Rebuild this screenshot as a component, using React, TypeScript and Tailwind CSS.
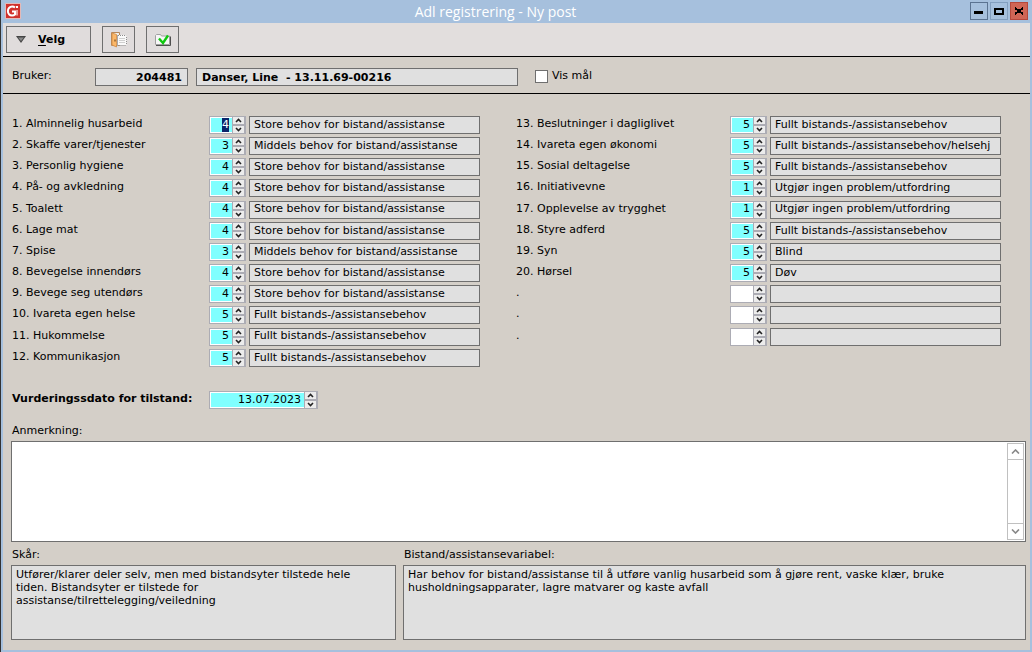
import { useEffect, useRef } from "react";
import type { ReactNode, Ref } from "react";
import clsx from "clsx";

type Row = { label: string; value: string; text: string };

const STORE = "Store behov for bistand/assistanse";
const MIDDELS = "Middels behov for bistand/assistanse";
const FULLT = "Fullt bistands-/assistansebehov";
const INGEN = "Utgjør ingen problem/utfordring";

const leftRows: Row[] = [
  { label: "1. Alminnelig husarbeid", value: "4", text: STORE },
  { label: "2. Skaffe varer/tjenester", value: "3", text: MIDDELS },
  { label: "3. Personlig hygiene", value: "4", text: STORE },
  { label: "4. På- og avkledning", value: "4", text: STORE },
  { label: "5. Toalett", value: "4", text: STORE },
  { label: "6. Lage mat", value: "4", text: STORE },
  { label: "7. Spise", value: "3", text: MIDDELS },
  { label: "8. Bevegelse innendørs", value: "4", text: STORE },
  { label: "9. Bevege seg utendørs", value: "4", text: STORE },
  { label: "10. Ivareta egen helse", value: "5", text: FULLT },
  { label: "11. Hukommelse", value: "5", text: FULLT },
  { label: "12. Kommunikasjon", value: "5", text: FULLT },
];

const rightRows: Row[] = [
  { label: "13. Beslutninger i dagliglivet", value: "5", text: FULLT },
  { label: "14. Ivareta egen økonomi", value: "5", text: "Fullt bistands-/assistansebehov/helsehj" },
  { label: "15. Sosial deltagelse", value: "5", text: FULLT },
  { label: "16. Initiativevne", value: "1", text: INGEN },
  { label: "17. Opplevelse av trygghet", value: "1", text: INGEN },
  { label: "18. Styre adferd", value: "5", text: FULLT },
  { label: "19. Syn", value: "5", text: "Blind" },
  { label: "20. Hørsel", value: "5", text: "Døv" },
  { label: ".", value: "", text: "" },
  { label: ".", value: "", text: "" },
  { label: ".", value: "", text: "" },
];

function Chevron({ down }: { down?: boolean }) {
  return (
    <svg viewBox="0 0 11 7" className={clsx("h-[7px] w-[11px]", down && "rotate-180")} fill="none">
      <path d="M3 5 5.5 2.5 8 5" stroke="#222" strokeWidth="1.6" />
    </svg>
  );
}

function Spinner({
  id,
  value,
  className,
  inputRef,
}: {
  id: string;
  value: string;
  className: string;
  inputRef?: Ref<HTMLInputElement>;
}) {
  return (
    <div className={clsx("flex h-[18px] shrink-0 gap-px bg-[#acacb4] p-px pr-[2px]", className)}>
      <input
        id={id}
        ref={inputRef}
        defaultValue={value}
        className={clsx(
          "min-w-0 flex-1 border border-r-0 border-white pr-[3px] text-right outline-none selection:bg-[#0a246a] selection:text-white",
          value ? "bg-[#80ffff]" : "bg-white",
        )}
      />
      <div className="flex w-[11px] shrink-0 flex-col justify-between">
        <button type="button" aria-label="Opp" className="h-[7px] bg-[#ececec]">
          <Chevron />
        </button>
        <button type="button" aria-label="Ned" className="h-[7px] bg-[#ececec]">
          <Chevron down />
        </button>
      </div>
    </div>
  );
}

function Column({
  rows,
  start,
  className,
  labelClassName,
  firstRef,
}: {
  rows: Row[];
  start: number;
  className: string;
  labelClassName: string;
  firstRef?: Ref<HTMLInputElement>;
}) {
  return (
    <div className={clsx("grid h-[254px] grow grid-rows-12", className)}>
      {rows.map((row, i) => {
        const id = `adl-${start + i}`;

        return (
          <div key={id} className="flex h-[18px] min-w-0">
            <label htmlFor={id} className={clsx("shrink-0 leading-4", labelClassName)}>
              {row.label}
            </label>
            <Spinner id={id} value={row.value} className="w-[37px]" inputRef={i === 0 ? firstRef : undefined} />
            <input
              readOnly
              aria-label={`${row.label} beskrivelse`}
              value={row.text}
              className="ml-[3px] min-w-0 flex-1 border border-[#6f6f6f] bg-[#e0e0e0] px-1 outline-none"
            />
          </div>
        );
      })}
    </div>
  );
}

function WindowButton({ label, className, children }: { label: string; className: string; children: ReactNode }) {
  return (
    <button type="button" aria-label={label} className={clsx("size-[18px] border", className)}>
      <svg viewBox="0 0 16 16" className="size-4" fill="none" stroke="#000" shapeRendering="crispEdges">
        {children}
      </svg>
    </button>
  );
}

function Logo() {
  return (
    <svg viewBox="0 0 16 16" className="mt-px size-4 shrink-0">
      <rect width="16" height="16" fill="#e3b9b8" />
      <rect x="1" y="1" width="14" height="14" fill="#d0312d" />
      <path
        d="M10 4.500C8.500 3.300 5.800 3.200 4.200 4.800 2.500 6.500 2.500 9.500 4 11.200c1.600 1.700 4.500 1.600 6 .3V8.500H7"
        fill="none"
        stroke="#fff"
        strokeWidth="2"
      />
      <path d="M12 7v5.500" stroke="#f3c4c2" strokeWidth="1.500" />
      <rect x="11" y="3" width="2" height="2" fill="#fff" />
    </svg>
  );
}

function DoorIcon() {
  return (
    <svg viewBox="0 0 18 18" className="size-[18px]">
      <path d="M1.500 1.500h8v13h-8z" fill="#f1eee9" stroke="#b5875a" />
      <path d="M2 2l4.500 1.500V16L2 14z" fill="#fbb768" stroke="#d08a45" strokeWidth=".8" />
      <path d="M5 8.500v2" stroke="#5b3a17" />
      <path d="M8 4h7l1.500 1.500V14H8z" fill="#fafafa" />
      <path d="M8 4.500h7.500M8.500 14.500h8M16.500 6v8" fill="none" stroke="#8d8d8d" strokeDasharray="1 1" />
      <path d="M9 7.500h6M9 9.500h6M9 11.500h6" stroke="#d0d0d0" />
      <path d="M7.500 4v11" stroke="#a9a9a9" />
    </svg>
  );
}

function CheckFolderIcon() {
  return (
    <svg viewBox="0 0 18 18" className="size-[18px]">
      <path d="M1.500 13.500v-9l1-1h4l1 1.500h8v8.500z" fill="#f7f7f7" stroke="#a0a0a0" />
      <path d="M2 14.500h14.500V5.500" fill="none" stroke="#4f4f4f" />
      <path d="m5 7.500 4 4.500 5-7.500" fill="none" stroke="#10c810" strokeWidth="2.400" />
    </svg>
  );
}

function ScrollArrow({ label, down }: { label: string; down?: boolean }) {
  return (
    <button
      type="button"
      aria-label={label}
      className={clsx("flex h-4 items-center justify-center border-[#c0c0c0]", down ? "border-t" : "border-b")}
    >
      <svg viewBox="0 0 9 5" className={clsx("h-[5px] w-[9px]", down && "rotate-180")} fill="none">
        <path d="M1 4.500 4.500 1 8 4.500" stroke="#888" strokeWidth="1.600" />
      </svg>
    </button>
  );
}

const fieldBox = "h-[18px] border border-[#6f6f6f] bg-[#e0e0e0] pt-px font-bold outline-none";
const toolButton = "flex h-[27px] items-center border border-[#6f6f6f] bg-[#e0dcdc]";
const infoBox =
  "block h-[75px] w-full resize-none border border-[#6f6f6f] bg-[#e0e0e0] py-[2px] pr-4 pl-1 leading-[13px] outline-none";

export default function App() {
  const firstField = useRef<HTMLInputElement>(null);

  useEffect(() => {
    firstField.current?.focus();
    firstField.current?.select();
  }, []);

  return (
    <div className="flex min-h-screen border-l border-[#333] bg-[#a6c0dd] font-['DejaVu_Sans',Verdana,sans-serif] text-[11px] text-black">
      <div className="flex min-w-0 flex-1 flex-col px-[2px] pb-[2px]">
        <header className="flex h-[23px] items-start gap-[2px] px-[2px] pt-[2px]">
          <Logo />
          <h1 className="flex-1 text-center font-['Open_Sans',sans-serif] text-[14px] leading-5 text-white">
            Adl registrering - Ny post
          </h1>
          <WindowButton label="Minimer" className="border-[#5b7391]">
            <path d="M3 9.500h9" strokeWidth="3" />
          </WindowButton>
          <WindowButton label="Maksimer" className="border-[#839fbf]">
            <path d="M4 5.500h8v5H4z" strokeWidth="2" />
          </WindowButton>
          <WindowButton label="Lukk" className="border-[#b5483c] bg-[#cf6555]">
            <path d="m4 5 8 6M12 5l-8 6" strokeWidth="2" />
          </WindowButton>
        </header>

        <div className="flex h-[34px] items-start gap-[11px] border-b border-black bg-[#e2dedd] pt-[3px] pl-[3px]">
          <button type="button" className={clsx(toolButton, "w-[85px] gap-3 pl-[9px] font-bold")}>
            <svg viewBox="0 0 10 7" className="h-[7px] w-[10px]">
              <path d="M0 0h10L5 7z" fill="#444" />
              <path d="M2 1.500h6L5 5z" fill="#888" />
            </svg>
            <span className="pt-[2px]">
              <span className="underline underline-offset-2">V</span>elg
            </span>
          </button>
          <button type="button" aria-label="Avslutt" className={clsx(toolButton, "w-[33px] justify-center")}>
            <DoorIcon />
          </button>
          <button type="button" aria-label="Lagre" className={clsx(toolButton, "w-[33px] justify-center")}>
            <CheckFolderIcon />
          </button>
        </div>

        <div className="flex h-[37px] items-center border-b border-black bg-[#d4cfc8] pt-[3px] pl-[9px]">
          <label htmlFor="bruker" className="w-[83px]">
            Bruker:
          </label>
          <input id="bruker" readOnly value="204481" className={clsx(fieldBox, "w-[93px] px-[5px] text-right")} />
          <input
            readOnly
            aria-label="Navn"
            value="Danser, Line  - 13.11.69-00216"
            className={clsx(fieldBox, "ml-2 w-[322px] px-[5px] whitespace-pre")}
          />
          <label className="ml-[17px] flex items-center gap-1">
            <input type="checkbox" className="size-[13px] appearance-none border border-[#6f6f6f] bg-white" />
            Vis mål
          </label>
        </div>

        <main className="flex-1 bg-[#d4cfc8] pt-[22px]">
          <div className="flex gap-9 pr-[29px] pl-[9px]">
            <Column
              rows={leftRows}
              start={1}
              className="basis-[468px]"
              labelClassName="w-[197px]"
              firstRef={firstField}
            />
            <Column rows={rightRows} start={13} className="basis-[485px]" labelClassName="w-[214px]" />
          </div>

          <div className="mt-[21px] flex pl-[9px]">
            <label htmlFor="dato" className="w-[197px] leading-4 font-bold">
              Vurderingssdato for tilstand:
            </label>
            <Spinner id="dato" value="13.07.2023" className="w-[109px]" />
          </div>

          <div className="mt-3 pr-1 pl-2">
            <label htmlFor="anmerkning" className="block h-5 pl-px leading-5">
              Anmerkning:
            </label>
            <div className="flex h-[101px] border border-[#6f6f6f] bg-white p-px">
              <textarea id="anmerkning" className="min-w-0 flex-1 resize-none outline-none" />
              <div className="flex w-[17px] flex-col justify-between border border-[#c0c0c0]">
                <ScrollArrow label="Rull opp" />
                <ScrollArrow label="Rull ned" down />
              </div>
            </div>
          </div>

          <div className="flex gap-[7px] pt-[3px] pr-1 pb-[10px] pl-2">
            <div className="grow basis-[385px]">
              <label htmlFor="skar" className="block h-5 pl-px leading-5">
                Skår:
              </label>
              <textarea
                id="skar"
                readOnly
                className={infoBox}
                value="Utfører/klarer deler selv, men med bistandsyter tilstede hele tiden. Bistandsyter er tilstede for assistanse/tilrettelegging/veiledning"
              />
            </div>
            <div className="grow basis-[623px]">
              <label htmlFor="variabel" className="block h-5 pl-px leading-5">
                Bistand/assistansevariabel:
              </label>
              <textarea
                id="variabel"
                readOnly
                className={infoBox}
                value="Har behov for bistand/assistanse til å utføre vanlig husarbeid som å gjøre rent, vaske klær, bruke husholdningsapparater, lagre matvarer og kaste avfall"
              />
            </div>
          </div>
        </main>
      </div>
    </div>
  );
}
